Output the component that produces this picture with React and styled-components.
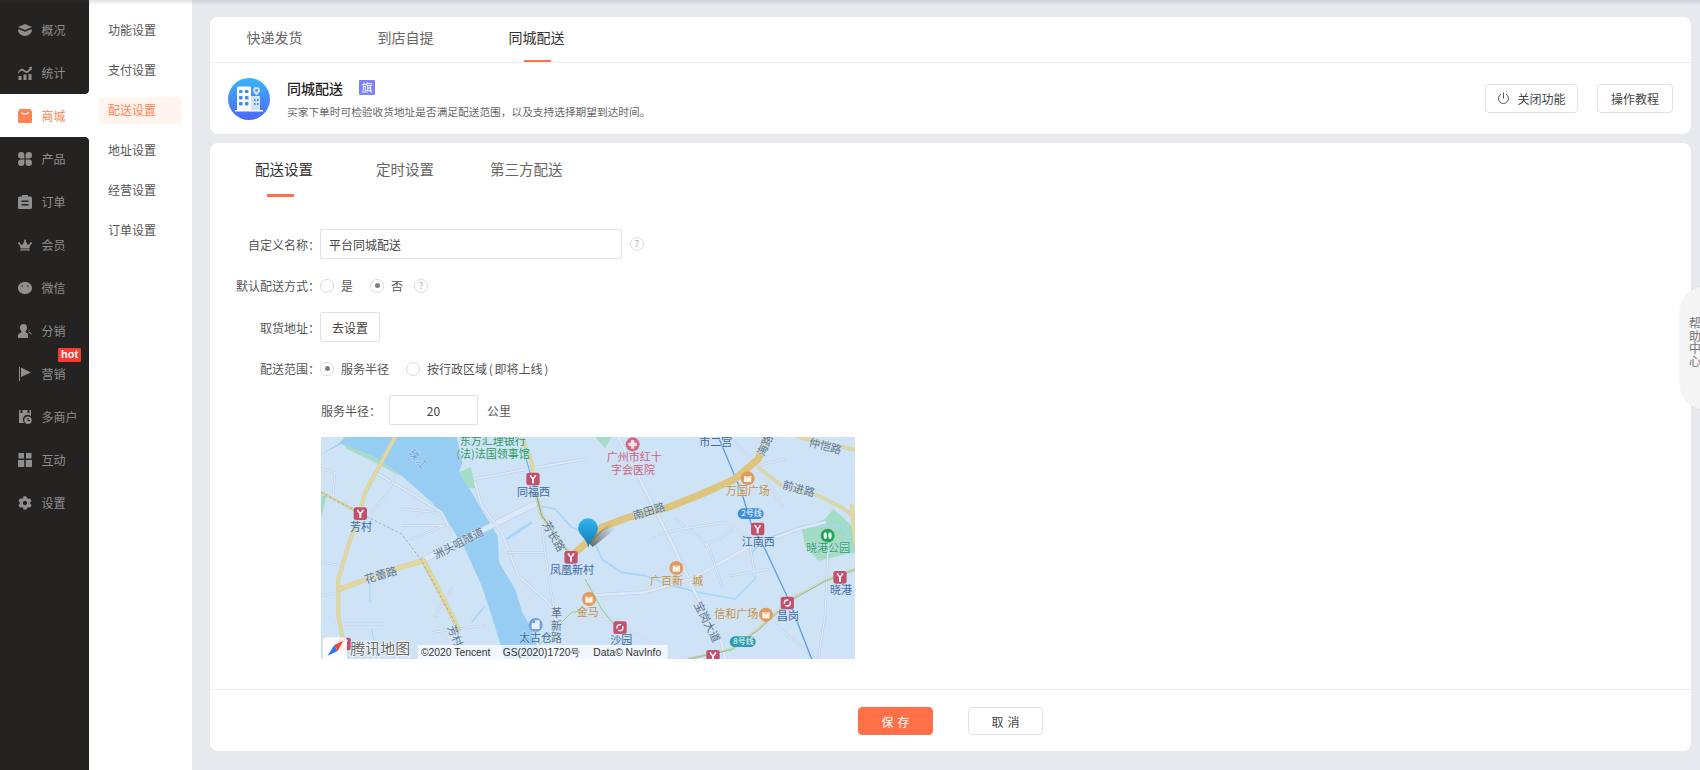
import React from 'react'
import styled, { createGlobalStyle, css } from 'styled-components'
import { FaCog, FaCrown } from 'react-icons/fa'

const CJK = '"Noto Sans CJK SC", "Noto Sans", sans-serif'
const ORANGE = '#ff7048'

const GlobalStyle = createGlobalStyle`
  html, body {
    margin: 0;
    padding: 0;
    overflow: hidden;
    background: #e8e9ed;
    font-family: ${ CJK };
  }
  * { box-sizing: border-box; }
`

const Page = styled.div`
  display: flex;
  position: relative;
  width: 1700px;
  height: 770px;
  overflow: hidden;
`

const TopShade = styled.div`
  position: absolute;
  top: 0;
  left: 0;
  right: 0;
  height: 5px;
  background: linear-gradient(rgba(70, 70, 80, .16), rgba(70, 70, 80, 0));
  z-index: 5;
`

const Sidebar = styled.nav`
  width: 89px;
  flex: none;
  padding-top: 8px;
  background: #252322;
`

const SideItem = styled.div`
  position: relative;
  display: flex;
  align-items: center;
  height: 43px;
  padding-left: 18px;
  gap: 9.5px;
  font-size: 12px;
  color: ${ ({ $active }) => $active ? '#ff8350' : '#8f8f8f' };
  background: ${ ({ $active }) => $active ? '#fff' : 'transparent' };
  & > svg {
    width: 14px;
    height: 14px;
    flex: none;
    fill: currentColor;
  }
  ${ ({ $active }) => $active && css`
    &::before, &::after {
      content: '';
      position: absolute;
      right: 0;
      width: 5px;
      height: 5px;
    }
    &::before {
      top: -5px;
      background: radial-gradient(circle at 0 0, transparent 5px, #fff 5.5px);
    }
    &::after {
      bottom: -5px;
      background: radial-gradient(circle at 0 100%, transparent 5px, #fff 5.5px);
    }
  ` }
`

const HotBadge = styled.span`
  position: absolute;
  top: -4px;
  left: 58px;
  width: 23px;
  height: 14px;
  border-radius: 1px;
  background: #fb3a30;
  color: #fff;
  font: bold 11px/13px "Liberation Sans", sans-serif;
  text-align: center;
`

const SubNav = styled.nav`
  width: 103px;
  flex: none;
  padding-top: 17px;
  background: #fff;
`

const SubItem = styled.div`
  width: 83px;
  height: 27px;
  margin: 0 0 13px 10px;
  padding-left: 9px;
  border-radius: 4px;
  font-size: 12px;
  line-height: 25px;
  color: ${ ({ $active }) => $active ? '#ff8350' : '#555' };
  background: ${ ({ $active }) => $active ? '#fff4ee' : 'transparent' };
`

const Main = styled.main`
  flex: 1;
  min-width: 0;
  display: flex;
  flex-direction: column;
  gap: 9px;
  padding: 17px 9px 0 18px;
`

const Card = styled.section`
  background: #fff;
  border-radius: 8px;
`

const TopTabs = styled.div`
  display: flex;
  height: 46px;
  border-bottom: 1px solid #f0f0f2;
`

const TopTab = styled.div`
  position: relative;
  width: 131px;
  height: 45px;
  padding-right: 2px;
  text-align: center;
  font-size: 14px;
  line-height: 41px;
  color: ${ ({ $active }) => $active ? '#333' : '#666' };
  ${ ({ $active }) => $active && css`
    &::after {
      content: '';
      position: absolute;
      left: 52px;
      bottom: 0;
      width: 27px;
      height: 2px;
      background: ${ ORANGE };
    }
  ` }
`

const Intro = styled.div`
  display: flex;
  align-items: center;
  height: 71px;
  padding: 0 18px;
`

const IntroIcon = styled.svg`
  width: 42px;
  height: 42px;
  flex: none;
  margin-right: 17px;
`

const IntroText = styled.div`
  flex: 1;
  min-width: 0;
`

const IntroTitle = styled.div`
  display: flex;
  align-items: center;
  height: 18px;
  margin-bottom: 8px;
  font-size: 14px;
  font-weight: 500;
  color: #222;
`

const Flag = styled.span`
  width: 16px;
  height: 15px;
  margin-left: 16px;
  border-radius: 1px;
  background: #7b80fb;
  color: #fff;
  font-size: 11px;
  font-weight: 400;
  line-height: 15px;
  text-align: center;
`

const IntroDesc = styled.div`
  font-size: 10.7px;
  line-height: 14px;
  color: #666;
  white-space: nowrap;
`

const GhostButton = styled.button`
  display: flex;
  align-items: center;
  justify-content: center;
  gap: 7px;
  width: ${ ({ $width }) => $width }px;
  height: 29px;
  margin-left: 19px;
  padding: 0;
  border: 1px solid #e2e2e6;
  border-radius: 4px;
  background: #fff;
  font-family: inherit;
  font-size: 12px;
  color: #444;
`

const FormTabs = styled.div`
  display: flex;
  height: 54px;
  padding-left: 45px;
`

const FormTab = styled.div`
  position: relative;
  width: ${ ({ $width }) => $width }px;
  font-size: 14.5px;
  line-height: 51px;
  color: ${ ({ $active }) => $active ? '#333' : '#666' };
  ${ ({ $active }) => $active && css`
    &::after {
      content: '';
      position: absolute;
      left: 12px;
      bottom: 0;
      width: 27px;
      height: 3px;
      background: ${ ORANGE };
    }
  ` }
`

const Form = styled.div`
  display: flex;
  flex-direction: column;
  gap: 11.5px;
  padding: 32px 0 30px;
`

const Row = styled.div`
  display: flex;
  align-items: center;
  height: 30px;
  font-size: 12px;
  color: #555;
`

const Label = styled.div`
  width: 110px;
  flex: none;
  text-align: right;
`

const TextField = styled.input`
  width: ${ ({ $width }) => $width }px;
  height: 30px;
  padding: 0 8px;
  border: 1px solid #e2e2e6;
  border-radius: 2px;
  outline: none;
  font-family: inherit;
  font-size: 12px;
  color: #444;
  text-align: ${ ({ $center }) => $center ? 'center' : 'left' };
`

const Hint = styled.span`
  width: 14px;
  height: 14px;
  margin-left: ${ ({ $gap }) => $gap }px;
  border: 1px solid #d9d9dc;
  border-radius: 50%;
  font-size: 9px;
  line-height: 12px;
  text-align: center;
  color: #aaa;
`

const RadioLabel = styled.span`
  display: flex;
  align-items: center;
  gap: 7px;
  margin-right: 17px;
  word-spacing: -1px;
`

const RadioDot = styled.span`
  display: flex;
  align-items: center;
  justify-content: center;
  width: 14px;
  height: 14px;
  border: 1px solid #d9d9dc;
  border-radius: 50%;
  &::after {
    content: '';
    width: 5px;
    height: 5px;
    border-radius: 50%;
    background: ${ ({ $on }) => $on ? '#7f7f7f' : 'transparent' };
  }
`

const SetButton = styled.button`
  width: 60px;
  height: 30px;
  padding: 0;
  border: 1px solid #e2e2e6;
  border-radius: 2px;
  background: #fff;
  font-family: inherit;
  font-size: 12px;
  color: #444;
`

const RadiusRow = styled(Row)`
  padding-left: 111px;
`

const RadiusLabel = styled.span`
  width: 68px;
  flex: none;
`

const Unit = styled.span`
  margin-left: 9px;
`

const MapBox = styled.div`
  width: 534px;
  height: 222px;
  margin: .5px 0 0 111px;
  overflow: hidden;
  & > svg {
    display: block;
  }
`

const Footer = styled.div`
  display: flex;
  justify-content: center;
  gap: 35px;
  padding: 17px 0 16px;
  border-top: 1px solid #f0f0f2;
`

const FooterButton = styled.button`
  width: 75px;
  height: 28px;
  padding: 0;
  border-radius: 4px;
  border: 1px solid ${ ({ $primary }) => $primary ? ORANGE : '#e2e2e6' };
  background: ${ ({ $primary }) => $primary ? ORANGE : '#fff' };
  color: ${ ({ $primary }) => $primary ? '#fff' : '#444' };
  font-family: inherit;
  font-size: 12px;
  letter-spacing: 4px;
  text-indent: 4px;
`

const HelpPanel = styled.aside`
  position: absolute;
  top: 286px;
  left: 1680px;
  width: 60px;
  height: 124px;
  padding: 31px 0 0 9px;
  border-radius: 26px;
  background: #f5f5f5;
  box-shadow: 0 0 3px rgba(0, 0, 0, .05);
  font-size: 12px;
  line-height: 12.6px;
  color: #777;
  z-index: 4;
`

const HelpText = styled.div`
  width: 12px;
`

// --- icons ---

const LayersIcon = () => (
  <svg viewBox="0 0 14 12">
    <path d="M7 0l7 3-7 3-7-3z" />
    <path d="M1 5.2l6 2.6 6-2.6 1 .9c0 2.6-3 5.9-7 5.9S0 8.700 0 6.100z" />
  </svg>
)

const StatsIcon = () => (
  <svg viewBox="0 0 14 14">
    <path d="M0 6.500C2 2.500 4 2 6.500 4S10 5 11.500 2L10.500 1.500 14 .5l-.5 4-1-.6C10.500 7.500 8 7.500 6 5.800S2.500 4.500 0 8z" />
    <path d="M.5 10h3v4h-3zM5.500 8.500h3V14h-3zM10.500 8h3v6h-3z" />
  </svg>
)

const BagIcon = () => (
  <svg viewBox="0 0 14 14">
    <path fillRule="evenodd" d="M1.500 0h11L14 3v9.500a1.500 1.500 0 0 1-1.500 1.500h-11A1.500 1.500 0 0 1 0 12.500V3zM3 3.500C4 6.500 10 6.500 11 3.500L10 3C9 5 5 5 4 3z" />
  </svg>
)

const PetalsIcon = () => (
  <svg viewBox="0 0 14 14">
    <path d="M3.200 0A3.200 3.200 0 0 1 6.400 3.200V6.400H3.200A3.200 3.200 0 0 1 3.200 0zM10.800 0A3.200 3.200 0 0 1 10.800 6.400H7.600V3.200A3.200 3.200 0 0 1 10.800 0zM3.200 14A3.200 3.200 0 0 1 3.200 7.600H6.400V10.800A3.200 3.200 0 0 1 3.200 14zM10.800 14A3.200 3.200 0 0 1 7.600 10.800V7.600H10.800A3.200 3.200 0 0 1 10.800 14z" />
  </svg>
)

const ClipboardIcon = () => (
  <svg viewBox="0 0 14 14">
    <path fillRule="evenodd" d="M4 0h6v1.500h2.500A1.500 1.500 0 0 1 14 3v9.500a1.500 1.500 0 0 1-1.500 1.500h-11A1.500 1.500 0 0 1 0 12.500V3a1.500 1.500 0 0 1 1.500-1.500H4zM3.500 5.500V7h7V5.500zM3.500 9v1.500h7V9z" />
  </svg>
)

const BlobIcon = () => (
  <svg viewBox="0 0 14 14">
    <path fillRule="evenodd" d="M7 1c4 0 7 2.600 7 6s-3 6-7 6-7-2.600-7-6 3-6 7-6zM4.200 4.200a.8.800 0 1 0 0 1.600.8.800 0 0 0 0-1.600zM9.800 4.200a.8.800 0 1 0 0 1.600.8.800 0 0 0 0-1.600z" />
  </svg>
)

const AgentIcon = () => (
  <svg viewBox="0 0 14 14">
    <path d="M5.500 0c2.200 0 3.600 1.600 3.600 3.800 0 1.500-.6 2.800-1.600 3.500v1c1 .4 2 .9 2.500 1.500V14H0v-2.500c0-1.300 2-2.500 3.500-3.200v-1C2.500 6.600 1.900 5.300 1.900 3.800 1.900 1.600 3.300 0 5.500 0z" />
    <path d="M10.500 5.500l1 1-1 1.500 2.500 2.500 1-.5-3-2.500z" />
  </svg>
)

const FlagIcon = () => (
  <svg viewBox="0 0 14 14">
    <path d="M1 0h1v14H1zM3 .5L13 5.500 3 10z" />
  </svg>
)

const StoreIcon = () => (
  <svg viewBox="0 0 14 14">
    <path fillRule="evenodd" d="M1 0h1.500v3H4.500V0h5v3h2V0H13v6.200A4.500 4.500 0 0 0 6.200 13H1zM10 6.500a3.700 3.700 0 1 1 0 7.400 3.700 3.700 0 0 1 0-7.400zM9.500 8v3h2.500v-1H10.500V8z" />
  </svg>
)

const BlocksIcon = () => (
  <svg viewBox="0 0 14 14">
    <path d="M.5 0h5.500v5.500H.5zM8 0h5.500v5.500H8zM0 7h6.200v7H0zM7.800 7H14v7H7.800z" />
  </svg>
)

const PowerIcon = () => (
  <svg width="13" height="13" viewBox="0 0 13 13" fill="none" stroke="#555" strokeWidth="1">
    <path d="M4 2.200a5 5 0 1 0 5 0M6.500 .5v6" />
  </svg>
)

const CityIcon = () => (
  <IntroIcon viewBox="0 0 42 42">
    <defs>
      <linearGradient id="cityBg" x1="0" y1="0" x2="0" y2="1">
        <stop offset="0" stopColor="#3bb4f7" />
        <stop offset="1" stopColor="#4d66f9" />
      </linearGradient>
    </defs>
    <circle cx="21" cy="21" r="21" fill="url(#cityBg)" />
    <path d="M9 10a1.500 1.500 0 0 1 1.500-1.500h11A1.500 1.500 0 0 1 23 10v23H9z" fill="#fff" />
    <path d="M23 18h9v15H23z" fill="#d5e2fd" />
    <path d="M7 32h28v1.500H7z" fill="#fff" />
    <g fill="#3f8cf5">
      <rect x="11" y="12" width="3.500" height="3" rx=".8" />
      <rect x="17" y="12" width="3.500" height="3" rx=".8" />
      <rect x="11" y="18" width="3.500" height="3.500" rx=".8" />
      <rect x="17" y="18" width="3.500" height="3.500" rx=".8" />
      <rect x="11" y="24" width="3.500" height="3.500" rx=".8" />
      <rect x="17" y="24" width="3.500" height="3.500" rx=".8" />
      <rect x="26" y="21" width="1.500" height="2" />
      <rect x="29" y="21" width="1.500" height="2" />
      <rect x="26" y="25" width="1.500" height="2" />
      <rect x="29" y="25" width="1.500" height="2" />
    </g>
    <path d="M28.500 9a3.400 3.400 0 0 1 3.400 3.400c0 2-3.400 5-3.400 5s-3.400-3-3.400-5A3.400 3.400 0 0 1 28.500 9z" fill="#d5e2fd" />
    <circle cx="28.500" cy="12.400" r="1.300" fill="#3f9af5" />
  </IntroIcon>
)

// --- map, drawn in units of a third of a pixel ---

const MAP_TONES = {
  metro: '#3e689f',
  road: '#5d7690',
  hospital: '#d0617c',
  shop: '#c8923e',
  park: '#24a35c',
  water: '#6aa5dc',
  bank: '#2a9e62',
  line: '#fff',
  logo: '#666'
}

const MapText = styled.text`
  font-family: ${ CJK };
  font-size: ${ ({ $size }) => $size || 33 }px;
  fill: ${ ({ $tone }) => MAP_TONES[$tone] };
  paint-order: stroke;
  stroke: ${ ({ $tone }) => $tone === 'line' ? 'none' : $tone === 'logo' ? '#fff' : 'rgba(207, 227, 247, .8)' };
  stroke-width: ${ ({ $tone }) => $tone === 'logo' ? 4 : 3 }px;
`

const Credit = styled.text`
  font-family: "Liberation Sans", sans-serif;
  font-size: 31px;
  fill: #333;
`

const Road = ({ d, w = 12, fill = '#e4d898', edge = '#c9cfb8' }) => (
  <g fill="none" strokeLinejoin="round" strokeLinecap="round">
    <path d={ d } stroke={ edge } strokeWidth={ w + 3 } />
    <path d={ d } stroke={ fill } strokeWidth={ w } />
  </g>
)

const Street = ({ d, w = 6 }) => <Road d={ d } w={ w } fill="#dbe9f9" edge="#bccde0" />

const Stream = ({ d, w = 5 }) => (
  <path d={ d } fill="none" stroke="#a5d5f9" strokeWidth={ w } strokeLinejoin="round" />
)

const Metro = ({ x, y, loop }) => (
  <g transform={ `translate(${ x } ${ y })` }>
    <rect x="-20" y="-19" width="40" height="38" rx="7" fill="#c5506c" />
    { loop ?
      <circle r="9" fill="none" stroke="#fff" strokeWidth="4" strokeDasharray="20 5" /> :
      <path d="M-10-12C-10-4-4-3-3 0V13H3V0C4-3 10-4 10-12H5C5-7 2-5 0-4-2-5-5-7-5-12z" fill="#fff" /> }
  </g>
)

const Poi = ({ x, y, color = '#e39a5f' }) => (
  <g transform={ `translate(${ x } ${ y })` }>
    <circle r="21" fill={ color } />
    <path d="M-11-7H11V11H-11z" fill="#fbf3ea" />
    <path d="M-4-7a4 4 0 0 0 8 0" fill="none" stroke={ color } strokeWidth="2" />
  </g>
)

const MapLayer = () => (
  <svg width="534" height="222" viewBox="18 24 1602 666">
    <defs>
      <linearGradient id="pinFill" x1="0" y1="0" x2="0" y2="1">
        <stop offset="0" stopColor="#33b5ee" />
        <stop offset="1" stopColor="#0d78b0" />
      </linearGradient>
      <linearGradient id="pinShadow" gradientUnits="userSpaceOnUse" x1="825" y1="345" x2="895" y2="290">
        <stop offset="0" stopColor="#4d4a3a" stopOpacity=".75" />
        <stop offset="1" stopColor="#4d4a3a" stopOpacity="0" />
      </linearGradient>
    </defs>
    <rect x="18" y="24" width="1602" height="666" fill="#cfe3f7" />

    <path d="M18 75L70 45 90 24H425L442 100 432 130 470 190 510 258 548 322 552 400 600 480 622 550 650 600 680 690H570L530 560 500 470 450 360 400 280 350 220 260 140 180 85 80 45z" fill="#98cdf3" />
    <path d="M85 45L180 85 260 140 245 135 170 95 95 60z" fill="#a5dcc6" />
    <path d="M432 130L468 115 482 178 462 178z" fill="#a5dcc6" />
    <path d="M18 200H35L20 262H18z" fill="#a5dcc6" />
    <path d="M840 24H890L870 58z" fill="#a5dcc6" />
    <path d="M1460 300L1530 270 1555 240 1600 280 1620 300 1620 370 1510 395 1470 350z" fill="#a3dcc5" />

    <Stream d="M840 340L860 390 920 430 990 440 1070 470 1150 490 1260 510 1320 450 1310 370 1350 330 1470 290 1580 290 1600 320" />
    <Stream d="M810 310L770 295 720 240 680 232" />
    <Stream d="M575 330L650 280" w={ 8 } />
    <Stream d="M470 580L510 530" />
    <Stream d="M165 450V520M170 600L185 680" w={ 3 } />

    <Street d="M320 395L530 290 660 225" w={ 16 } />
    <Street d="M480 150L640 120 810 90" />
    <Street d="M480 160L500 230 560 310 610 440 700 520 720 560" />
    <Street d="M180 130L300 200 380 250 400 290" />
    <Street d="M240 140L220 190 170 250" w={ 4 } />
    <Street d="M260 240L360 250M265 290L390 290M290 330L385 290" w={ 4 } />
    <Street d="M18 120L60 130 55 190M18 400L80 410M18 500L70 490" w={ 4 } />
    <Street d="M60 585H205M350 610L510 590M360 560L410 480" w={ 4 } />
    <Street d="M580 370H690L720 560M680 290L700 440" w={ 4 } />
    <Street d="M910 24L1070 340 1140 490 1220 640 1230 690" w={ 8 } />
    <Street d="M810 500L990 490 1130 450 1290 360 1450 300 1530 280" w={ 8 } />
    <Street d="M1020 320L1100 300 1230 280 1300 320 1320 440M1080 270L1180 350 1220 470M1170 350L1260 300M1250 440L1360 420" w={ 4 } />
    <Street d="M1240 24L1330 110 1410 90M1400 230L1340 130M1540 340L1530 560 1510 690" w={ 4 } />
    <Street d="M1350 560L1500 690M820 570H900L1000 640 1060 690" w={ 4 } />

    <Road d="M240 24L205 90 150 190 135 250 100 350 70 450 70 560 85 640" w={ 9 } />
    <Road d="M75 480L240 420 325 395" w={ 13 } />
    <Road d="M325 395L370 480 430 600" w={ 12 } />
    <Road d="M18 190L130 250" w={ 6 } />
    <Road d="M620 24L650 100 665 200 680 260 760 370" w={ 9 } />
    <Road d="M1330 115L1400 170 1510 200 1580 235 1620 265" w={ 7 } />
    <Road d="M1610 230L1620 340" w={ 9 } />
    <Road d="M1450 24L1620 62" w={ 8 } />
    <Road d="M1620 420L1530 455 1430 510 1330 600 1250 660 1120 690" w={ 5 } />
    <path d="M1620 422L1530 457 1430 512 1330 602 1250 662 1120 690" fill="none" stroke="#52b9c4" strokeWidth="2" />
    <path d="M18 190L130 250 260 315 320 395 430 600" fill="none" stroke="#7d92ad" strokeWidth="2" strokeDasharray="8 6" />
    <path d="M625 60L665 200 680 260 760 370" fill="none" stroke="#5ba7dc" strokeWidth="3" />
    <path d="M1210 24L1280 190 1310 290 1350 360 1420 510 1490 690" fill="none" stroke="#5c9fe0" strokeWidth="4" />
    <path d="M810 450L860 540 900 590" fill="none" stroke="#8ed068" strokeWidth="3" />
    <path d="M810 545L770 550 680 640 640 690" fill="none" stroke="#9ad274" strokeWidth="3" />

    <Road d="M770 380L810 345 860 295 940 265 1060 235 1160 195 1260 150 1330 90 1355 24" w={ 18 } fill="#dfc47c" edge="#d6c088" />
    <path d="M825 345L895 290" stroke="url(#pinShadow)" strokeWidth="24" fill="none" />

    <Metro x={ 136 } y={ 254 } />
    <Metro x={ 654 } y={ 150 } />
    <Metro x={ 768 } y={ 385 } />
    <Metro x={ 1328 } y={ 300 } />
    <Metro x={ 1575 } y={ 445 } />
    <Metro x={ 1417 } y={ 522 } loop />
    <Metro x={ 915 } y={ 596 } loop />
    <Metro x={ 1194 } y={ 682 } />
    <Metro x={ 88 } y={ 645 } />
    <Poi x={ 1298 } y={ 148 } />
    <Poi x={ 1084 } y={ 417 } />
    <Poi x={ 1353 } y={ 557 } />
    <Poi x={ 822 } y={ 510 } />

    <circle cx="953" cy="46" r="21" fill="#d6657f" />
    <path d="M948 33h10v8h8v10h-8v8h-10v-8h-8V41h8z" fill="#f5dfe4" />
    <circle cx="1538" cy="320" r="21" fill="#23a35b" />
    <ellipse cx="1531" cy="320" rx="5" ry="10" fill="#e7f5ec" />
    <ellipse cx="1545" cy="320" rx="5" ry="10" fill="#e7f5ec" />
    <circle cx="662" cy="588" r="21" fill="#6f9de6" />
    <path d="M650 600V582H660V574H674V600z" fill="#e8f0fc" />

    <rect x="1268" y="238" width="78" height="32" rx="16" fill="#3f90d9" />
    <rect x="1244" y="622" width="78" height="32" rx="16" fill="#2c9eac" />
    <MapText $tone="line" $size={ 24 } x="1279" y="262">2号线</MapText>
    <MapText $tone="line" $size={ 24 } x="1255" y="646">8号线</MapText>

    <MapText $tone="water" x="280" y="92" transform="rotate(48 300 80)">珠江</MapText>
    <MapText $tone="bank" x="434" y="48">东方汇理银行</MapText>
    <MapText $tone="bank" x="424" y="86">(法)法国领事馆</MapText>
    <MapText $tone="metro" x="606" y="200">同福西</MapText>
    <MapText $tone="metro" x="105" y="306">芳村</MapText>
    <MapText $tone="metro" x="705" y="434">凤凰新村</MapText>
    <MapText $tone="metro" x="1280" y="352">江南西</MapText>
    <MapText $tone="metro" x="1545" y="494">晓港</MapText>
    <MapText $tone="metro" x="1386" y="574">昌岗</MapText>
    <MapText $tone="metro" x="886" y="646">沙园</MapText>
    <MapText $tone="metro" x="1153" y="50">市二宫</MapText>
    <MapText $tone="metro" x="612" y="640">太古仓</MapText>
    <MapText $tone="road" x="148" y="452" transform="rotate(-17 190 440)">花蕾路</MapText>
    <MapText $tone="road" x="362" y="392" transform="rotate(-27 360 390)">洲头咀隧道</MapText>
    <MapText $tone="road" x="690" y="290" transform="rotate(60 690 280)">芳长路</MapText>
    <MapText $tone="road" x="400" y="610" transform="rotate(68 410 600)">芳村</MapText>
    <MapText $tone="road" x="958" y="272" transform="rotate(-17 958 272)">南田路</MapText>
    <MapText $tone="road" x="1400" y="178" transform="rotate(15 1400 178)">前进路</MapText>
    <MapText $tone="road" x="1480" y="50" transform="rotate(15 1480 50)">仲恺路</MapText>
    <MapText $tone="road" x="1330" y="82" transform="rotate(-65 1340 70)">海路</MapText>
    <MapText $tone="road" x="1140" y="540" transform="rotate(63 1150 530)">宝岗大道</MapText>
    <MapText $tone="road" x="708" y="565">革</MapText>
    <MapText $tone="road" x="708" y="603">新</MapText>
    <MapText $tone="road" x="708" y="640">路</MapText>
    <MapText $tone="hospital" x="875" y="96">广州市红十</MapText>
    <MapText $tone="hospital" x="888" y="134">字会医院</MapText>
    <MapText $tone="shop" x="1232" y="198">万国广场</MapText>
    <MapText $tone="shop" x="1005" y="468">广百新</MapText>
    <MapText $tone="shop" x="1132" y="468">城</MapText>
    <MapText $tone="shop" x="1198" y="566">信和广场</MapText>
    <MapText $tone="shop" x="785" y="560">金马</MapText>
    <MapText $tone="park" x="1474" y="370">晓港公园</MapText>

    <path d="M819 268a30 30 0 0 1 30 30c0 20-22 30-29 58-4-28-31-38-31-58a30 30 0 0 1 30-30z" fill="url(#pinFill)" />

    <rect x="24" y="625" width="72" height="68" rx="10" fill="#fff" opacity=".9" />
    <path d="M85 635L58 648 68 666z" fill="#f2472f" />
    <path d="M38 680L58 648 68 666z" fill="#2a7af0" />
    <MapText $tone="logo" $size={ 45 } x="106" y="675">腾讯地图</MapText>
    <rect x="308" y="648" width="750" height="44" fill="#fff" opacity=".7" />
    <Credit x="318" y="680">©2020 Tencent</Credit>
    <Credit x="563" y="680">GS(2020)1720号</Credit>
    <Credit x="835" y="680">Data© NavInfo</Credit>
  </svg>
)

const SIDE_ITEMS = [
  { label: '概况', icon: <LayersIcon /> },
  { label: '统计', icon: <StatsIcon /> },
  { label: '商城', icon: <BagIcon />, active: true },
  { label: '产品', icon: <PetalsIcon /> },
  { label: '订单', icon: <ClipboardIcon /> },
  { label: '会员', icon: <FaCrown /> },
  { label: '微信', icon: <BlobIcon /> },
  { label: '分销', icon: <AgentIcon /> },
  { label: '营销', icon: <FlagIcon />, hot: true },
  { label: '多商户', icon: <StoreIcon /> },
  { label: '互动', icon: <BlocksIcon /> },
  { label: '设置', icon: <FaCog /> }
]

const SUB_ITEMS = ['功能设置', '支付设置', '配送设置', '地址设置', '经营设置', '订单设置']

const App = () => (
  <Page>
    <GlobalStyle />
    <TopShade />
    <Sidebar>
      { SIDE_ITEMS.map(({ label, icon, active, hot }) => (
        <SideItem key={ label } $active={ active }>
          { icon }
          <span>{ label }</span>
          { hot && <HotBadge>hot</HotBadge> }
        </SideItem>
      )) }
    </Sidebar>
    <SubNav>
      { SUB_ITEMS.map((label) => (
        <SubItem key={ label } $active={ label === '配送设置' }>{ label }</SubItem>
      )) }
    </SubNav>
    <Main>
      <Card>
        <TopTabs>
          <TopTab>快递发货</TopTab>
          <TopTab>到店自提</TopTab>
          <TopTab $active>同城配送</TopTab>
        </TopTabs>
        <Intro>
          <CityIcon />
          <IntroText>
            <IntroTitle>同城配送<Flag>旗</Flag></IntroTitle>
            <IntroDesc>买家下单时可检验收货地址是否满足配送范围，以及支持选择期望到达时间。</IntroDesc>
          </IntroText>
          <GhostButton $width={ 93 }><PowerIcon />关闭功能</GhostButton>
          <GhostButton $width={ 76 }>操作教程</GhostButton>
        </Intro>
      </Card>
      <Card>
        <FormTabs>
          <FormTab $active $width={ 121 }>配送设置</FormTab>
          <FormTab $width={ 114 }>定时设置</FormTab>
          <FormTab $width={ 90 }>第三方配送</FormTab>
        </FormTabs>
        <Form>
          <Row>
            <Label>自定义名称：</Label>
            <TextField $width={ 302 } defaultValue="平台同城配送" />
            <Hint $gap={ 8 }>?</Hint>
          </Row>
          <Row>
            <Label>默认配送方式：</Label>
            <RadioLabel><RadioDot />是</RadioLabel>
            <RadioLabel><RadioDot $on />否</RadioLabel>
            <Hint $gap={ -6 }>?</Hint>
          </Row>
          <Row>
            <Label>取货地址：</Label>
            <SetButton>去设置</SetButton>
          </Row>
          <Row>
            <Label>配送范围：</Label>
            <RadioLabel><RadioDot $on />服务半径</RadioLabel>
            <RadioLabel><RadioDot />按行政区域 ( 即将上线 )</RadioLabel>
          </Row>
          <RadiusRow>
            <RadiusLabel>服务半径：</RadiusLabel>
            <TextField $width={ 89 } $center defaultValue="20" />
            <Unit>公里</Unit>
          </RadiusRow>
          <MapBox><MapLayer /></MapBox>
        </Form>
        <Footer>
          <FooterButton $primary>保存</FooterButton>
          <FooterButton>取消</FooterButton>
        </Footer>
      </Card>
    </Main>
    <HelpPanel><HelpText>帮助中心</HelpText></HelpPanel>
  </Page>
)

export default App
